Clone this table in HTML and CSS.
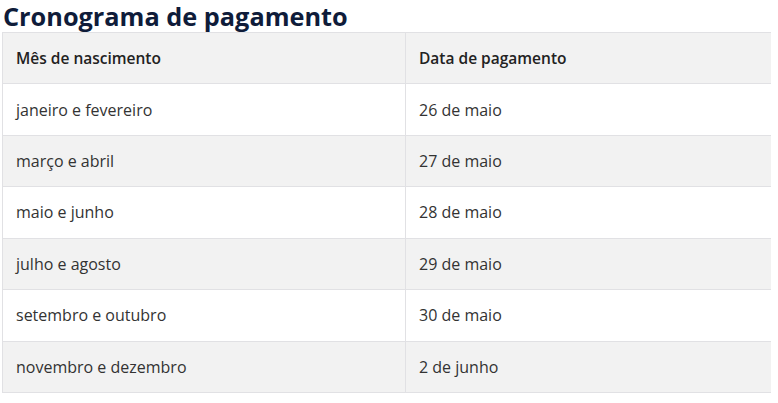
FILE: index.html
```html
<!DOCTYPE html>
<html lang="pt">
<head>
<meta charset="utf-8">
<link rel="stylesheet" href="styles.css">
</head>
<body>
<h2 class="title">Cronograma de pagamento</h2>
<table class="schedule">
  <thead>
    <tr><th>Mês de nascimento</th><th>Data de pagamento</th></tr>
  </thead>
  <tbody>
    <tr><td>janeiro e fevereiro</td><td>26 de maio</td></tr>
    <tr><td>março e abril</td><td>27 de maio</td></tr>
    <tr><td>maio e junho</td><td>28 de maio</td></tr>
    <tr><td>julho e agosto</td><td>29 de maio</td></tr>
    <tr><td>setembro e outubro</td><td>30 de maio</td></tr>
    <tr><td>novembro e dezembro</td><td>2 de junho</td></tr>
  </tbody>
</table>
</body>
</html>
```
FILE: styles.css
```css
html, body { background: #fff; }
body {
  margin: 0 7px 0 2px;
  font-family: "Open Sans", Lato, sans-serif;
  color: #333;
}
.title {
  margin: 0 0 0 1px;
  height: 32px;
  font-size: 25.3px;
  line-height: 32px;
  font-weight: 700;
  color: #0f1c3a;
}
.schedule {
  width: 770px;
  border-collapse: collapse;
  font-size: 16px;
}
.schedule th, .schedule td {
  border: 1px solid #e1e1e4;
  height: 50.43px;
  padding: 0 13px;
  text-align: left;
  vertical-align: middle;
}
.schedule th:first-child, .schedule td:first-child { width: 376px; }
.schedule th { font-size: 15.5px; font-weight: 600; color: #222; background: #f2f2f2; }
.schedule td { font-weight: 400; }
.schedule tbody tr:nth-child(even) td { background: #f2f2f2; }
.schedule tbody tr:nth-child(odd) td { background: #fff; }
```
